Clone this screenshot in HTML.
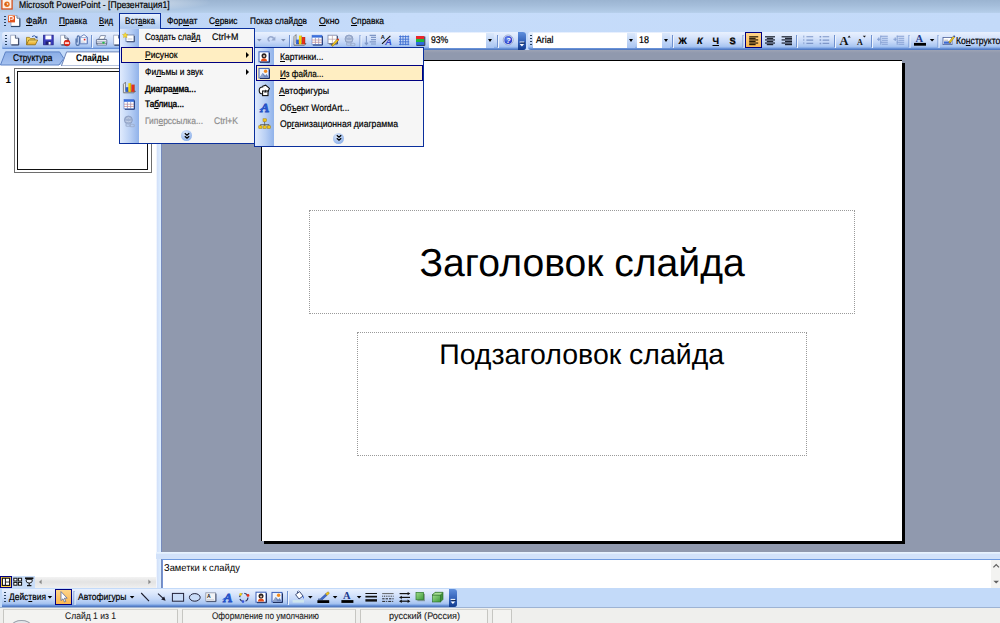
<!DOCTYPE html>
<html lang="ru"><head><meta charset="utf-8"><title>Microsoft PowerPoint - [Презентация1]</title>
<style>
*{box-sizing:border-box}
html,body{margin:0;padding:0}
body{width:1000px;height:623px;overflow:hidden;position:relative;background:#c3daf9;font-family:"Liberation Sans",sans-serif;font-size:9px}
.a{position:absolute}
.t{text-rendering:geometricPrecision;-webkit-text-stroke:0.2px currentColor;transform-origin:0 0;position:absolute;white-space:nowrap;font-family:"Liberation Sans",sans-serif;display:block}
u{text-decoration:underline;text-decoration-thickness:1px;text-underline-offset:1px}
#title{left:0;top:0;width:1000px;height:13.5px;background:linear-gradient(#9bb4d1 0,#a3bcd9 35%,#b1cae6 80%,#b6cfeb 90%,#c9e0f9 96%,#c4daf7 100%)}
#glow{left:-20px;top:-7px;width:230px;height:19px;background:radial-gradient(ellipse at center,rgba(255,255,255,.5) 0,rgba(255,255,255,.32) 45%,rgba(255,255,255,0) 72%)}
#menubar{left:0;top:13px;width:1000px;height:19px;background:linear-gradient(90deg,#b9d1f3,#c6dcfa 40%,#c3daf9)}
#tb1{left:2px;top:32px;width:524px;height:18px;background:linear-gradient(#e9f1fe 0,#dbe7fc 25%,#c5d8f8 55%,#adc8f2 76%,#a0bfef 84%,#7099dc 89%,#5f89d2 95%,#4f76bc 98%,#4f76bc 100%);border-radius:3px}
#tb2{left:528px;top:32px;width:480px;height:18px;border-radius:3px 0 0 3px;background:linear-gradient(#e9f1fe 0,#dbe7fc 25%,#c5d8f8 55%,#adc8f2 76%,#a0bfef 84%,#7099dc 89%,#5f89d2 95%,#4f76bc 98%,#4f76bc 100%)}
#left{left:0;top:49px;width:156px;height:539px;background:#fff}
#work{left:162px;top:50px;width:838px;height:502px;background:#9099ae}
#slide{left:261px;top:60px;width:641px;height:481px;background:#fff;box-shadow:3px 3px 0 #000;border-top:1px solid #000;border-left:1px solid #000}
.ph{position:absolute;border:1px dotted #9a9a9a}
#notes{left:162px;top:559px;width:838px;height:29px;background:#fff;border-left:1px solid #7494d4;border-top:1px solid #6f9be0}
#draw{left:0;top:588px;width:1000px;height:19px;background:#c3daf9}
#tb3{left:2px;top:588.5px;width:455px;height:18px;background:linear-gradient(#e9f1fe 0,#dbe7fc 25%,#c5d8f8 55%,#adc8f2 76%,#a0bfef 84%,#7099dc 89%,#5f89d2 95%,#4f76bc 98%,#4f76bc 100%);border-radius:0 3px 3px 0}
#status{left:0;top:607px;width:1000px;height:16px;background:#efefed;border-top:1px solid #9db3d4}
.menu{position:absolute;background:#f6f6f6;border:1px solid #0a2f9c}
.strip{position:absolute;left:0;top:0;bottom:0;width:18.5px;background:linear-gradient(90deg,#e0ebfd,#b8cff4 55%,#90b2ea)}
.hl{position:absolute;background:#ffeec2;border:1px solid #000080}
.sep{position:absolute;width:1px;background:#6a8ccb;box-shadow:1px 0 0 #f1f6fd}
.grip{position:absolute;width:2px;height:11px;background:repeating-linear-gradient(#27415f 0 1.4px,transparent 1.4px 2.9px)}
.grip:before{content:"";position:absolute;left:1px;top:1px;width:2px;height:11px;background:repeating-linear-gradient(#fff 0 1.4px,transparent 1.4px 2.9px);z-index:-1}
.combo{position:absolute;background:#fff;height:15px;top:32.5px}
.dd{position:absolute;top:32.5px;height:15px;width:8px;background:linear-gradient(#dbe8fb,#a9c5f2)}
.dd:after,.arr:after{content:"";position:absolute;left:2px;top:6px;border:2.5px solid transparent;border-top:3px solid #000;border-bottom:0}
.arr{position:absolute;width:8px;height:14px}
.on{position:absolute;background:linear-gradient(#fed58a,#fcb64e);border:1px solid #000080}
</style></head>
<body>
<div id="title" class="a"></div><div id="glow" class="a"></div>
<svg class="a" style="left:0;top:0" width="14" height="11" viewBox="0 0 14 11"><rect x="1.9" y="-1" width="10.2" height="10" fill="#fdf1e8" stroke="#d4501c" stroke-width="1.3"/><circle cx="7" cy="4.2" r="2.7" fill="#e8741e"/><circle cx="7.3" cy="4" r="1" fill="#fbe0c8"/><path d="M4.6 4.2h2.4" stroke="#b8400e" stroke-width=".8"/></svg>
<span class="t" style="left:19.3px;top:0px;font-size:9.8px;line-height:12px;transform:scaleX(0.8793);">Microsoft PowerPoint - [Презентация1]</span>
<div id="menubar" class="a"></div>
<div class="grip" style="left:4px;top:16px"></div>
<svg class="a" style="left:6px;top:12px" width="18" height="18" viewBox="6 12 18 18"><path d="M11 15.600h6l2.600 2.600v8h-8.600z" fill="#fff" stroke="#8a9ab8" stroke-width=".7"/><path d="M17 15.600v2.600h2.600" fill="#dde6f4" stroke="#3a4a6a" stroke-width=".7"/><path d="M19.900 18.400v8.200h-9" fill="none" stroke="#1f3a5f" stroke-width="1"/><rect x="8" y="15.400" width="7" height="7" fill="#e2521c"/><path d="M9.400 21v-4.400h2.400q1.600 0 1.600 1.300t-1.600 1.300h-1.400" fill="none" stroke="#fff" stroke-width="1.100"/><path d="M8 15.400h7" stroke="#f4a070" stroke-width=".8"/></svg>
<div class="a" style="left:119px;top:13px;width:42px;height:16px;background:linear-gradient(#e6f0fd,#a9c6ee);border:1px solid #0a2f9c;border-bottom:0"></div>
<span class="t" style="left:26px;top:16px;font-size:9.6px;line-height:12px;transform:scaleX(0.8897);"><u>Ф</u>айл</span><span class="t" style="left:59px;top:16px;font-size:9.6px;line-height:12px;transform:scaleX(0.8634);"><u>П</u>равка</span><span class="t" style="left:99px;top:16px;font-size:9.6px;line-height:12px;transform:scaleX(0.8061);"><u>В</u>ид</span><span class="t" style="left:125px;top:16px;font-size:9.6px;line-height:12px;transform:scaleX(0.8408);">Вст<u>а</u>вка</span><span class="t" style="left:167px;top:16px;font-size:9.6px;line-height:12px;transform:scaleX(0.8944);">Фор<u>м</u>ат</span><span class="t" style="left:209px;top:16px;font-size:9.6px;line-height:12px;transform:scaleX(0.8669);">С<u>е</u>рвис</span><span class="t" style="left:250px;top:16px;font-size:9.6px;line-height:12px;transform:scaleX(0.8624);">Показ слайд<u>о</u>в</span><span class="t" style="left:319px;top:16px;font-size:9.6px;line-height:12px;transform:scaleX(0.919);"><u>О</u>кно</span><span class="t" style="left:351px;top:16px;font-size:9.6px;line-height:12px;transform:scaleX(0.8762);"><u>С</u>правка</span>
<div id="tb1" class="a"></div><div id="tb2" class="a"></div>
<div class="a" style="left:518px;top:32px;width:8px;height:18px;background:linear-gradient(#5f8fdd,#2d5cb4 60%,#103a8c);border-radius:0 3px 3px 0"></div>
<div class="grip" style="left:5px;top:35px"></div><div class="grip" style="left:530px;top:35px"></div>
<div class="combo" style="left:429px;width:65px"></div><div class="dd" style="left:486px"></div><span class="t" style="left:431px;top:35px;font-size:9.8px;line-height:12px;transform:scaleX(0.882);">93%</span><div class="combo" style="left:533px;width:102px"></div><div class="dd" style="left:627px"></div><span class="t" style="left:536px;top:35px;font-size:9.8px;line-height:12px;transform:scaleX(0.8926);">Arial</span><div class="combo" style="left:637px;width:33px"></div><div class="dd" style="left:662px"></div><span class="t" style="left:639px;top:35px;font-size:9.8px;line-height:12px;transform:scaleX(0.9173);">18</span><span class="t" style="left:678.5px;top:35px;font-size:9.2px;line-height:12px;font-weight:700;">Ж</span><span class="t" style="left:697px;top:35px;font-size:9.2px;line-height:12px;font-weight:700;font-style:italic;">К</span><span class="t" style="left:712.5px;top:35px;font-size:9.2px;line-height:12px;font-weight:700;"><u>Ч</u></span><span class="t" style="left:729.5px;top:35px;font-size:9.2px;line-height:12px;font-weight:700;text-shadow:0.6px 0.6px 0 #888;">S</span><div class="on" style="left:745px;top:32px;width:17px;height:16px"></div>
<span class="t" style="left:956.3px;top:36px;font-size:9.9px;line-height:12px;transform:scaleX(0.8716);">Ко<u>н</u>структор</span>
<div id="left" class="a"></div>
<div class="a" style="left:0;top:49px;width:162px;height:16px;background:#c3daf9"></div>
<svg class="a" style="left:0;top:49px" width="162" height="17" viewBox="0 0 162 17"><defs><linearGradient id="tg" x1="0" y1="0" x2="0" y2="1"><stop offset="0" stop-color="#8aade7"/><stop offset="1" stop-color="#a6c2ef"/></linearGradient></defs><path d="M66.6 2.9H157V17H61.4z" fill="#fff" stroke="#6f86b8" stroke-width="1"/><path d="M0.5 16L5.5 2.9H59.6L63.8 9.5L59 16z" fill="url(#tg)" stroke="#5d82c5" stroke-width="1"/></svg>
<span class="t" style="left:12.8px;top:53px;font-size:9.8px;line-height:12px;transform:scaleX(0.8496);">Структура</span><span class="t" style="left:76px;top:53px;font-size:9.8px;line-height:12px;font-weight:700;transform:scaleX(0.8382);-webkit-text-stroke:0.1px #000;">Слайды</span><div class="a" style="left:14px;top:68px;width:137.7px;height:105px;border:1.5px solid #6e6e6e;background:#fff"></div><div class="a" style="left:17px;top:71px;width:131px;height:99px;border:1px solid #111;background:#fff"></div>
<span class="t" style="left:5.8px;top:74px;font-size:9px;line-height:12px;font-weight:700;font-family:"Liberation Serif", serif;">1</span><div class="a" style="left:155.5px;top:50px;width:6.5px;height:538px;background:linear-gradient(90deg,#fff,#d4e2fa 25%,#ddeeff 75%,#7f92c4 86%,#6b7fb5)"></div>
<div class="a" style="left:0;top:576.5px;width:155.5px;height:11.5px;background:linear-gradient(#f3f3f3,#e3e3e3 45%,#e6e6e6 60%,#f0f0f0)"></div><div class="a" style="left:0;top:576px;width:35px;height:12px;background:#c9ddf8"></div>
<div class="on" style="left:0;top:576px;width:12px;height:12px;background:#ffd24a"></div>


<div id="work" class="a"></div><div class="a" style="left:162px;top:50px;width:838px;height:3px;background:linear-gradient(#9da3b5,#9099ae)"></div>
<div id="slide" class="a"></div>
<div class="ph" style="left:309px;top:210px;width:546px;height:104px"></div><div class="ph" style="left:357px;top:332px;width:450px;height:124px"></div>
<span class="t" style="left:419.5px;top:240px;font-size:39.11px;line-height:47px;-webkit-text-stroke:0;">Заголовок слайда</span><span class="t" style="left:439.2px;top:338px;font-size:28.48px;line-height:34px;-webkit-text-stroke:0;">Подзаголовок слайда</span>
<div class="a" style="left:156px;top:552px;width:844px;height:7px;background:linear-gradient(#e9f4ff 0,#e4f0fe 18%,#d2e2fa 35%,#d2e2fa 100%)"></div><div id="notes" class="a"></div>
<div class="a" style="left:991px;top:560px;width:9px;height:28px;background:#f3f3f1"></div>
<span class="t" style="left:164px;top:563px;font-size:9.9px;line-height:12px;transform:scaleX(0.9478);-webkit-text-stroke:0;">Заметки к слайду</span>
<div id="draw" class="a"></div><div id="tb3" class="a"></div>
<div class="a" style="left:449px;top:588.5px;width:8px;height:18px;background:linear-gradient(#5f8fdd,#2d5cb4 60%,#103a8c);border-radius:0 3px 3px 0"></div>
<div class="grip" style="left:4px;top:592px"></div>
<span class="t" style="left:9px;top:592px;font-size:9.6px;line-height:12px;transform:scaleX(0.8797);">Дейс<u>т</u>вия</span><span class="t" style="left:78px;top:592px;font-size:9.6px;line-height:12px;transform:scaleX(0.888);">Автофи<u>г</u>уры</span><div class="on" style="left:55px;top:589px;width:17px;height:16px"></div>


<div id="status" class="a"></div>
<div class="a" style="left:3px;top:609px;width:175px;height:14px;border-left:1px solid #c6c6c2;border-right:1px solid #c6c6c2;border-top:1px solid #d4d4d0;background:#f3f3f1"></div><div class="a" style="left:182px;top:609px;width:174px;height:14px;border-left:1px solid #c6c6c2;border-right:1px solid #c6c6c2;border-top:1px solid #d4d4d0;background:#f3f3f1"></div><div class="a" style="left:360px;top:609px;width:128px;height:14px;border-left:1px solid #c6c6c2;border-right:1px solid #c6c6c2;border-top:1px solid #d4d4d0;background:#f3f3f1"></div><div class="a" style="left:492px;top:609px;width:20px;height:14px;border-left:1px solid #c6c6c2;border-right:1px solid #c6c6c2;border-top:1px solid #d4d4d0;background:#f3f3f1"></div><div class="a" style="left:12px;top:619.5px;width:19px;height:10px;border:1px solid #9aa0aa;border-radius:50%;background:#e4e6ea"></div>
<span class="t" style="left:65px;top:611px;font-size:9.6px;line-height:12px;transform:scaleX(0.8903);-webkit-text-stroke:0.1px #222;color:#1a1a1a;">Слайд 1 из 1</span><span class="t" style="left:212px;top:611px;font-size:9.6px;line-height:12px;transform:scaleX(0.8528);-webkit-text-stroke:0.1px #222;color:#1a1a1a;">Оформление по умолчанию</span><span class="t" style="left:389px;top:611px;font-size:9.6px;line-height:12px;transform:scaleX(0.9468);-webkit-text-stroke:0.1px #222;color:#1a1a1a;">русский (Россия)</span><svg class="a" style="left:0;top:0;pointer-events:none" width="1000" height="623" viewBox="0 0 1000 623" ><defs>
<linearGradient id="gy" x1="0" y1="0" x2="0" y2="1"><stop offset="0" stop-color="#fbe27e"/><stop offset="1" stop-color="#e5a21f"/></linearGradient>
<linearGradient id="gg" x1="0" y1="0" x2="1" y2="1"><stop offset="0" stop-color="#9fdc8c"/><stop offset="1" stop-color="#3d9a3a"/></linearGradient>
<linearGradient id="gb" x1="0" y1="0" x2="0" y2="1"><stop offset="0" stop-color="#5a8ae6"/><stop offset="1" stop-color="#2a4fb8"/></linearGradient>
<radialGradient id="gh" cx=".4" cy=".35" r=".7"><stop offset="0" stop-color="#6f8ff5"/><stop offset="1" stop-color="#1a2fc0"/></radialGradient>
</defs><path d="M10.6 35.2h4.8l3 3v6.4h-7.8z" fill="#fff" stroke="#8a9ab8" stroke-width=".7"/><path d="M15.399999999999999 35.2v3h3" fill="#dfe6f2" stroke="#3a4a6a" stroke-width=".8"/><path d="M18.7 38.2v6.800000000000001h-7.3" fill="none" stroke="#2a3553" stroke-width="1"/><path d="M26.5 44.6V37.4h3l1 1.2h4.4v2" fill="#f3cf55" stroke="#9a7a1a" stroke-width=".8"/><path d="M26.5 44.8l2.2-4.8h9l-2.4 4.8z" fill="url(#gy)" stroke="#8a6a12" stroke-width=".8"/><path d="M32 36.6q2.4-2 4.4.4" fill="none" stroke="#3a5fa8" stroke-width="1"/><path d="M35.2 37.8l2.4.6-.4-2.6z" fill="#2a4f98"/><rect x="43.6" y="35.2" width="9.6" height="9.6" fill="#3b3dbd" stroke="#23238a" stroke-width=".8"/><rect x="45.4" y="35.4" width="6" height="4" fill="#fff"/><rect x="45.6" y="41.4" width="5.4" height="3.2" fill="#20206a"/><rect x="48.6" y="42" width="2" height="2.6" fill="#fff"/><path d="M60.6 35.2h4.2l3 3v6.4h-7.2z" fill="#fff" stroke="#8a9ab8" stroke-width=".7"/><path d="M64.8 35.2v3h3" fill="#dfe6f2" stroke="#3a4a6a" stroke-width=".8"/><path d="M68.1 38.2v6.800000000000001h-6.7" fill="none" stroke="#2a3553" stroke-width="1"/><circle cx="67" cy="43" r="3" fill="#e8281a" stroke="#b01808" stroke-width=".5"/><rect x="64.9" y="42.3" width="4.2" height="1.5" fill="#fff"/><path d="M80 37.2l4-2.6 3.4 2.6v6.6h-7.4z" fill="#fff" stroke="#4a6ab0" stroke-width=".8"/><path d="M80.4 37.6h6.6v5.8h-6.6z" fill="#f7f9fd" stroke="#5a7ac0" stroke-width=".6"/><rect x="83.8" y="38.8" width="1.6" height="1.6" fill="#e02020"/><path d="M81 41h2.4M81 42.2h4" stroke="#b0b8d0" stroke-width=".5"/><path d="M76 38.600v4.800q0 2 1.700 2t1.700-2v-6.200q0-1.300-1.100-1.300t-1.100 1.300v5.400" fill="none" stroke="#4f6fa8" stroke-width="1.100"/><path d="M91.5 35V47" stroke="#6f91cf" stroke-width="1"/><path d="M92.5 36V48" stroke="#eef4fd" stroke-width="1"/><path d="M98.6 39.4l2-3.8h5l-1.6 3.8z" fill="#fff" stroke="#5a6a8a" stroke-width=".7"/><path d="M96.4 40.2q0-.8.8-.8h8.8q.8 0 .8.8v3.4h-10.4z" fill="#e6e9f0" stroke="#4a5878" stroke-width=".8"/><rect x="97" y="43.2" width="9.4" height="1.8" fill="#fff" stroke="#4a5878" stroke-width=".7"/><circle cx="103.5" cy="42.6" r="1.2" fill="#20c040"/><path d="M96.6 41.6h10" stroke="#9aa6c0" stroke-width=".7"/><path d="M113.6 35.2h5l3 3v6.6h-8z" fill="#fff" stroke="#8a9ab8" stroke-width=".7"/><path d="M118.6 35.2v3h3" fill="#dfe6f2" stroke="#3a4a6a" stroke-width=".8"/><path d="M121.89999999999999 38.2v7.0h-7.5" fill="none" stroke="#2a3553" stroke-width="1"/><path d="M257 39h4.6l-2.3 2.6z" fill="#7f91b5"/><path d="M269.600 41.400q-2.400-1.400-1-3.400t4-.800l1 1.200" fill="none" stroke="#95a7cd" stroke-width="1.600"/><path d="M275.400 36.400v4.200h-4.200z" fill="#95a7cd"/><path d="M281 39h4.6l-2.3 2.6z" fill="#7f91b5"/><path d="M289.5 35V47" stroke="#6f91cf" stroke-width="1"/><path d="M290.5 36V48" stroke="#eef4fd" stroke-width="1"/><path d="M294 45.1V36.6l2-2v8.5" fill="#f4f4f4" stroke="#555" stroke-width=".7"/><path d="M294 45.2h10.5l1.5-1.6h-10" fill="#ddd" stroke="#444" stroke-width=".7"/><rect x="296.2" y="39.6" width="2.4" height="4.6" fill="#2a62d8"/><rect x="299" y="35.6" width="2.6" height="8.6" fill="#f6d800"/><rect x="302" y="37.0" width="3" height="7.2" fill="#e8301a"/><path d="M298.6 39.6v4.6M301.6 35.6v8.6M305 37.0v7.2" stroke="#6a2a10" stroke-width=".6" opacity=".6"/><rect x="312" y="35.2" width="10" height="9.4" fill="#fff" stroke="#5a78c8" stroke-width=".6"/><rect x="312" y="35.2" width="10" height="2.4" fill="#3a6fdc"/><path d="M315.4 37.6v7M318.7 37.6v7" stroke="#8a93c8" stroke-width=".8"/><path d="M312 40.0h10M312 42.300000000000004h10" stroke="#c98a8a" stroke-width=".7"/><path d="M322.4 36.2v8.9h-9.6" fill="none" stroke="#1f3878" stroke-width="1"/><rect x="328" y="35.2" width="9" height="8.4" fill="#fff" stroke="#7a86a8" stroke-width=".8"/><path d="M332.4 35.2v8.4M328 39.2h9" stroke="#b8a0a8" stroke-width=".7"/><path d="M337.4 36v8h-8" fill="none" stroke="#3a4a70" stroke-width="1"/><path d="M331.4 45.2l5.6-6 1.4 1.4-5.6 5.8z" fill="#f2c81e" stroke="#7a5a10" stroke-width=".5"/><path d="M337 39.2l1-1 1.2 1.4-.8 1z" fill="#e8381a"/><path d="M331.2 45.4l.4-1.2 1 .9z" fill="#222"/><circle cx="349" cy="39" r="4" fill="#9fb0d0" stroke="#8a9cc0" stroke-width=".8"/><path d="M347 37.5q2-1.5 4 0M346 40q3 1.5 6 0" stroke="#c8d4ea" stroke-width=".9" fill="none"/><rect x="346.5" y="42.6" width="4.6" height="2.6" rx="1.3" fill="none" stroke="#9fb0d0" stroke-width="1.1"/><rect x="350.4" y="43.2" width="4.6" height="2.6" rx="1.3" fill="none" stroke="#9fb0d0" stroke-width="1.1"/><path d="M360 35V47" stroke="#6f91cf" stroke-width="1"/><path d="M361 36V48" stroke="#eef4fd" stroke-width="1"/><path d="M366.4 36v8.4M364.8 42.6l1.6 2 1.6-2" fill="none" stroke="#7f97c6" stroke-width="1.1"/><path d="M369.6 35.4h6.4M371 37.4h5M371 39.6h5M369.6 41.8h6.4M371 44h5" stroke="#7f97c6" stroke-width="1.2"/><text x="380.8" y="39.4" font-family="Liberation Sans,sans-serif" font-weight="700" font-size="5.6" fill="#111">A</text><path d="M382 43.8l8.4-8" stroke="#111" stroke-width="1.1"/><text x="385" y="45.2" font-family="Liberation Sans,sans-serif" font-weight="700" font-style="italic" font-size="9.6" fill="#3548c8">A</text><path d="M400.4 35.4v9.8M403 35.4v9.8M405.6 35.4v9.8M408.2 35.4v9.8M399 36.6h10.2M399 39.2h10.2M399 41.8h10.2M399 44.4h10.2" stroke="#3f6fd2" stroke-width=".9"/><rect x="416" y="36" width="8.4" height="3" fill="#e8262a"/><rect x="416" y="39" width="8.4" height="3" fill="#1fb83a"/><rect x="416" y="42" width="8.4" height="3" fill="#2c6ae0"/><path d="M424.8 36.6v8.8h-8.4" fill="none" stroke="#26324e" stroke-width="1"/><path d="M497.5 35V47" stroke="#6f91cf" stroke-width="1"/><path d="M498.5 36V48" stroke="#eef4fd" stroke-width="1"/><circle cx="508.2" cy="40" r="5" fill="#e8eefb" stroke="#8a9cc8" stroke-width=".8"/><circle cx="508.2" cy="40" r="3.9" fill="url(#gh)"/><text x="506.3" y="42.6" font-family="Liberation Sans,sans-serif" font-weight="700" font-style="italic" font-size="7" fill="#fff">?</text><path d="M519.6 42h4.6" stroke="#fff" stroke-width="1"/><path d="M519.6 44h4.6l-2.3 2.6z" fill="#fff"/><path d="M520.4 43h4.6" stroke="#000" stroke-width=".8" opacity=".7"/><path d="M672.5 35V47" stroke="#6f91cf" stroke-width="1"/><path d="M673.5 36V48" stroke="#eef4fd" stroke-width="1"/><path d="M743 35V47" stroke="#6f91cf" stroke-width="1"/><path d="M744 36V48" stroke="#eef4fd" stroke-width="1"/><rect x="749.20" y="36.20" width="9" height="1.2" fill="#2a1c08" opacity="1"/><rect x="749.20" y="37.76" width="6.4" height="1.2" fill="#2a1c08" opacity="1"/><rect x="749.20" y="39.32" width="9" height="1.2" fill="#2a1c08" opacity="1"/><rect x="749.20" y="40.88" width="6.4" height="1.2" fill="#2a1c08" opacity="1"/><rect x="749.20" y="42.44" width="9" height="1.2" fill="#2a1c08" opacity="1"/><rect x="749.20" y="44.00" width="6.4" height="1.2" fill="#2a1c08" opacity="1"/><rect x="765.00" y="36.20" width="10" height="1.2" fill="#1c2230" opacity="1"/><rect x="766.80" y="37.76" width="6.4" height="1.2" fill="#1c2230" opacity="1"/><rect x="765.00" y="39.32" width="10" height="1.2" fill="#1c2230" opacity="1"/><rect x="766.80" y="40.88" width="6.4" height="1.2" fill="#1c2230" opacity="1"/><rect x="765.00" y="42.44" width="10" height="1.2" fill="#1c2230" opacity="1"/><rect x="766.80" y="44.00" width="6.4" height="1.2" fill="#1c2230" opacity="1"/><rect x="781.60" y="36.20" width="10.4" height="1.2" fill="#1c2230" opacity="1"/><rect x="785.00" y="37.76" width="7" height="1.2" fill="#1c2230" opacity="1"/><rect x="781.60" y="39.32" width="10.4" height="1.2" fill="#1c2230" opacity="1"/><rect x="785.00" y="40.88" width="7" height="1.2" fill="#1c2230" opacity="1"/><rect x="781.60" y="42.44" width="10.4" height="1.2" fill="#1c2230" opacity="1"/><rect x="785.00" y="44.00" width="7" height="1.2" fill="#1c2230" opacity="1"/><path d="M796.5 35V47" stroke="#6f91cf" stroke-width="1"/><path d="M797.5 36V48" stroke="#eef4fd" stroke-width="1"/><path d="M806.4 36.8h6.8M806.4 40.1h6.8M806.4 43.4h6.8" stroke="#7f97c8" stroke-width="1.1"/><path d="M803.8 35.6v9" stroke="#8fa6d2" stroke-width="1" stroke-dasharray="2 1.3"/><path d="M822.6 36.8h6.6M822.6 40.1h6.6M822.6 43.4h6.6" stroke="#7f97c8" stroke-width="1.1"/><path d="M819.6 36.8h1.6M819.6 40.1h1.6M819.6 43.4h1.6" stroke="#7f97c8" stroke-width="1.5"/><path d="M834.5 35V47" stroke="#6f91cf" stroke-width="1"/><path d="M835.5 36V48" stroke="#eef4fd" stroke-width="1"/><text x="839.4" y="44.8" font-family="Liberation Serif,serif" font-weight="700" font-size="12.4" fill="#111">A</text><path d="M847.6 37.4l1.5-1.8 1.5 1.8z" fill="#111"/><text x="857" y="45" font-family="Liberation Serif,serif" font-weight="700" font-size="8" fill="#111">A</text><path d="M862.8 35.8h3.2l-1.6 1.8z" fill="#111"/><path d="M871.5 35V47" stroke="#6f91cf" stroke-width="1"/><path d="M872.5 36V48" stroke="#eef4fd" stroke-width="1"/><path d="M880.4 36.2h7.4M882 38.2h5.8M882 40.2h5.8M880.4 42.2h7.4M882 44.2h5.8" stroke="#86a0d2" stroke-width="1.100"/><path d="M877 39.2h3.2M878.8 37.4v3.6" stroke="#86a0d2" stroke-width="1.100"/><path d="M880.8 35.600v9.200" stroke="#86a0d2" stroke-width="1"/><path d="M896.8 36.2h7.4M898.4 38.2h5.8M898.4 40.2h5.8M896.8 42.2h7.4M898.4 44.2h5.8" stroke="#86a0d2" stroke-width="1.100"/><path d="M893.4 39.2h3.2M895.1999999999999 37.4v3.6" stroke="#86a0d2" stroke-width="1.100"/><path d="M897.1999999999999 35.600v9.200" stroke="#86a0d2" stroke-width="1"/><path d="M909 35V47" stroke="#6f91cf" stroke-width="1"/><path d="M910 36V48" stroke="#eef4fd" stroke-width="1"/><text x="915.6" y="42.2" font-family="Liberation Serif,serif" font-weight="700" font-size="10.5" fill="#1c3a8c">A</text><rect x="914" y="42.900000000000006" width="12" height="2.8" fill="#000"/><path d="M929.8 39h4.6l-2.3 2.6z" fill="#000"/><path d="M938 35V47" stroke="#6f91cf" stroke-width="1"/><path d="M939 36V48" stroke="#eef4fd" stroke-width="1"/><rect x="943" y="37.4" width="9" height="7.2" fill="#fff" stroke="#4a5f98" stroke-width=".8"/><rect x="944" y="41.4" width="7" height="2.4" fill="#3f6ad0"/><path d="M944.2 40.2h4" stroke="#9a9a9a" stroke-width=".7"/><path d="M948.6 42.2l4.6-6 1.4 1-4.6 6z" fill="#f2c61a" stroke="#7a5a10" stroke-width=".4"/><path d="M953.2 36.2l.8-1 1.4 1-.8 1z" fill="#2a4fb0"/><rect x="2.4" y="578.2" width="7.2" height="7.2" fill="#fff" stroke="#111" stroke-width="1.1"/><path d="M5.4 578v7.4" stroke="#111" stroke-width="1"/><path d="M5.8 582h3.6" stroke="#111" stroke-width=".8"/><rect x="13.8" y="578.2" width="3.2" height="2.8" fill="#fff" stroke="#111" stroke-width="1"/><rect x="18.4" y="578.2" width="3.2" height="2.8" fill="#fff" stroke="#111" stroke-width="1"/><rect x="13.8" y="582.4" width="3.2" height="2.8" fill="#fff" stroke="#111" stroke-width="1"/><rect x="18.4" y="582.4" width="3.2" height="2.8" fill="#fff" stroke="#111" stroke-width="1"/><path d="M25 578.2h8.4" stroke="#111" stroke-width="1.6"/><path d="M26.2 579.4v1.6q0 2 3 2t3-2v-1.6z" fill="#e8eef8" stroke="#111" stroke-width=".9"/><path d="M29.2 583v2M27 585.6h4.4" stroke="#111" stroke-width="1.1"/><path d="M41.6 579.6v4.6l-2.6-2.3z" fill="#8a8a8a"/><path d="M148.4 579.6v4.6l2.6-2.3z" fill="#8a8a8a"/><path d="M993.400 567.400l2.800-2.800 2.800 2.800" fill="none" stroke="#606060" stroke-width="1.300"/><path d="M993.400 580.800l2.800 2.800 2.800-2.800z" fill="#606060"/><path d="M47.6 596h4.6l-2.3 2.6z" fill="#000"/><path d="M61 591.6v9l2-1.8 1.4 3.2 1.4-.6-1.4-3.2h2.8z" fill="#fff" stroke="#5a6a9a" stroke-width=".8"/><path d="M74 591V604" stroke="#6f91cf" stroke-width="1"/><path d="M75 592V605" stroke="#eef4fd" stroke-width="1"/><path d="M129.8 596h4.6l-2.3 2.6z" fill="#000"/><path d="M141.2 593l7.8 8.2" stroke="#1a1a2a" stroke-width="1.1"/><path d="M158 593.6l6 5.6" stroke="#1a1a2a" stroke-width="1.1"/><path d="M165.6 600.8l-4.4-1.2 3-3z" fill="#1a1a2a"/><rect x="172.4" y="593.4" width="11.2" height="7.8" fill="#c9dcf8" stroke="#23233a" stroke-width="1"/><ellipse cx="194.8" cy="597.4" rx="5.4" ry="3.8" fill="#c9dcf8" stroke="#23233a" stroke-width="1"/><rect x="205.8" y="592.8" width="9.8" height="8.4" fill="#f2f3f5" stroke="#8a93a8" stroke-width=".8"/><path d="M216 593.6v8h-9.6" fill="none" stroke="#4a5570" stroke-width="1"/><text x="207" y="598.4" font-family="Liberation Sans,sans-serif" font-weight="700" font-size="5" fill="#111">A</text><path d="M207 599.6h7" stroke="#b8bcc8" stroke-width=".6"/><text x="223.5" y="601.8" font-family="Liberation Serif,serif" font-weight="700" font-style="italic" font-size="13.5" fill="#2a5bd6" stroke="#2450c4" stroke-width=".8">A</text><path d="M222 599.4l3.6-2.2v2.6z" fill="#2a5bd6"/><circle cx="243.8" cy="597.4" r="4.2" fill="none" stroke="#2a3560" stroke-width="1.2" stroke-dasharray="4.6 2"/><circle cx="240.6" cy="594.4" r="1.3" fill="#f2d21a"/><circle cx="248" cy="595.4" r="1.4" fill="#e8301a"/><circle cx="243" cy="601.6" r="1.3" fill="#3a55d8"/><rect x="256" y="592.2" width="10" height="10" fill="#fff" stroke="#3a5fb8" stroke-width="1"/><path d="M266.5 593.2v9.5h-9.5" fill="none" stroke="#1f3060" stroke-width="1"/><path d="M258 601.6q0-3 3-3t3 3z" fill="#e8501a"/><circle cx="261" cy="596.1" r="2.5" fill="#2b2222"/><circle cx="261.1" cy="596.5" r="1.1" fill="#d8c0b0"/><rect x="272" y="592.4" width="10" height="9.6" fill="#eef3fb" stroke="#3a5fb8" stroke-width="1"/><path d="M282.5 593.4v9.1h-9.5" fill="none" stroke="#1f3060" stroke-width="1"/><circle cx="278.6" cy="595.1999999999999" r="1.7" fill="#f28a1c"/><path d="M272.6 601.4l3.2-4.4 2.4 2.6 1.6-1.6 1.8 3.4z" fill="#6d86b8"/><path d="M272.6 601.4l3.2-4.4 1.2 4.4z" fill="#90a4cc"/><path d="M287.5 591V604" stroke="#6f91cf" stroke-width="1"/><path d="M288.5 592V605" stroke="#eef4fd" stroke-width="1"/><path d="M295.6 594.6l4-3 3.4 4.4-4 3z" fill="#fff" stroke="#2a3a6a" stroke-width=".9"/><path d="M298.4 590.8q-1.4.2-.8 2.400" fill="none" stroke="#2a3a6a" stroke-width=".8"/><path d="M302.8 595.6q1.6 1.2 1 3.400-1.4-1.200-1-3.400z" fill="#2a5bd6"/><rect x="292.6" y="600" width="11.4" height="2.6" fill="#cfe6ee"/><path d="M308 596h4.6l-2.3 2.6z" fill="#000"/><path d="M320.6 598.6l5-4.600 1.400 1.400-5 4.600z" fill="#3f6ad0" stroke="#24407a" stroke-width=".5"/><path d="M325.6 594l1.600-1.800q1.200-.600 1.800.2t-.2 1.600l-1.800 1.400z" fill="#f2c61a" stroke="#7a5a10" stroke-width=".4"/><path d="M318 599.200h3" stroke="#24407a" stroke-width=".9"/><rect x="317.400" y="600.200" width="11.800" height="2.800" fill="#000"/><path d="M332.8 596h4.6l-2.3 2.6z" fill="#000"/><text x="343.0" y="599.4" font-family="Liberation Serif,serif" font-weight="700" font-size="10.5" fill="#1c3a8c">A</text><rect x="341.4" y="600.0999999999999" width="12" height="2.8" fill="#000"/><path d="M356.8 596h4.6l-2.3 2.6z" fill="#000"/><rect x="365.4" y="593" width="11.600" height="1" fill="#111"/><rect x="365.400" y="595.800" width="11.600" height="1.700" fill="#111"/><rect x="365.400" y="599.200" width="11.600" height="2.400" fill="#111"/><path d="M382.200 593.600h11.400" stroke="#555" stroke-width=".9"/><path d="M382.200 596.200h11.400" stroke="#333" stroke-width="1" stroke-dasharray="1 .8"/><path d="M382.200 598.800h11.400" stroke="#222" stroke-width="1" stroke-dasharray="2.400 1"/><path d="M382.200 601.400h11.400" stroke="#222" stroke-width="1" stroke-dasharray="3 1 1 1"/><path d="M399.600 593.600h9" stroke="#111" stroke-width="1.200"/><path d="M410.400 593.600l-2.800-1.700v3.400z" fill="#111"/><path d="M401 597.400h9" stroke="#111" stroke-width="1.200"/><path d="M399 597.400l2.800-1.700v3.400z" fill="#111"/><path d="M401 601.200h7.600" stroke="#111" stroke-width="1.200"/><path d="M399 601.200l2.800-1.700v3.400zM410.400 601.200l-2.800-1.700v3.400z" fill="#111"/><rect x="417.400" y="593.800" width="7.600" height="7.400" fill="#5a6a5a" opacity=".55"/><rect x="416" y="592.400" width="7.600" height="7.400" fill="url(#gg)" stroke="#2f7a2c" stroke-width=".7"/><path d="M432.400 595l2.600-2.600h8v7l-2.600 2.600z" fill="#3f8f3a" stroke="#2a6a28" stroke-width=".6"/><rect x="432.400" y="595" width="8" height="7" fill="url(#gg)" stroke="#2a6a28" stroke-width=".6"/><path d="M432.400 595l2.600-2.600h8l-2.600 2.600z" fill="#a8e094" stroke="#2a6a28" stroke-width=".5"/><path d="M450.6 599.4h4.6" stroke="#fff" stroke-width="1"/><path d="M450.6 601.4h4.6l-2.3 2.6z" fill="#fff"/><path d="M451.40000000000003 600.4h4.6" stroke="#000" stroke-width=".8" opacity=".7"/></svg>

<div class="menu" style="left:119px;top:28px;width:136px;height:116px"><div class="strip"></div></div>
<div class="a" style="left:120px;top:28px;width:40px;height:1px;background:#b4ccf1"></div>
<div class="hl" style="left:121px;top:47px;width:132px;height:16px"></div>
<span class="t" style="left:145px;top:32px;font-size:9.6px;line-height:12px;transform:scaleX(0.8427);">Создать сла<u>й</u>д</span><span class="t" style="left:211.5px;top:32px;font-size:9.6px;line-height:12px;transform:scaleX(0.9287);">Ctrl+M</span><span class="t" style="left:145px;top:50px;font-size:9.6px;line-height:12px;transform:scaleX(0.8976);"><u>Р</u>исунок</span><span class="t" style="left:145px;top:67px;font-size:9.6px;line-height:12px;transform:scaleX(0.8821);">Фи<u>л</u>ьмы и звук</span><span class="t" style="left:145px;top:84px;font-size:9.6px;line-height:12px;transform:scaleX(0.8805);-webkit-text-stroke:0.4px #000;">Диагра<u>м</u>ма...</span><span class="t" style="left:145px;top:99px;font-size:9.6px;line-height:12px;transform:scaleX(0.8544);-webkit-text-stroke:0.4px #000;">Та<u>б</u>лица...</span><span class="t" style="left:145px;top:116px;font-size:9.6px;line-height:12px;color:#8d8d8d;transform:scaleX(0.8821);">Гип<u>е</u>рссылка...</span><span class="t" style="left:214px;top:116px;font-size:9.6px;line-height:12px;color:#8d8d8d;transform:scaleX(0.8909);">Ctrl+K</span><div class="a" style="left:246px;top:52px;border:3px solid transparent;border-left:3.5px solid #000;border-right:0"></div><div class="a" style="left:246px;top:69px;border:3px solid transparent;border-left:3.5px solid #000;border-right:0"></div>
<svg class="a" style="left:0;top:0;pointer-events:none" width="1000" height="623" viewBox="0 0 1000 623" ><rect x="126" y="35" width="8" height="6.400" fill="#fff" stroke="#6a7aa0" stroke-width=".8"/><path d="M134.400 36v5.800h-7.600" fill="none" stroke="#3a4a70" stroke-width=".9"/><path d="M127.600 39h4.800" stroke="#b0b8cc" stroke-width=".8"/><path d="M125.200 32.600l.9 1.700 1.900.2-1.400 1.300.4 1.900-1.800-.9-1.700.9.300-1.900-1.300-1.300 1.900-.2z" fill="#f7dc3a" stroke="#c8a010" stroke-width=".4"/><path d="M123.4 92.7V84.2l2-2v8.5" fill="#f4f4f4" stroke="#555" stroke-width=".7"/><path d="M123.4 92.8h10.5l1.5-1.6h-10" fill="#ddd" stroke="#444" stroke-width=".7"/><rect x="125.60000000000001" y="87.2" width="2.4" height="4.6" fill="#2a62d8"/><rect x="128.4" y="83.2" width="2.6" height="8.6" fill="#f6d800"/><rect x="131.4" y="84.60000000000001" width="3" height="7.2" fill="#e8301a"/><path d="M128.0 87.2v4.6M131.0 83.2v8.6M134.4 84.60000000000001v7.2" stroke="#6a2a10" stroke-width=".6" opacity=".6"/><rect x="124" y="99.4" width="10" height="9.4" fill="#fff" stroke="#5a78c8" stroke-width=".6"/><rect x="124" y="99.4" width="10" height="2.4" fill="#3a6fdc"/><path d="M127.4 101.80000000000001v7M130.7 101.80000000000001v7" stroke="#8a93c8" stroke-width=".8"/><path d="M124 104.2h10M124 106.5h10" stroke="#c98a8a" stroke-width=".7"/><path d="M134.4 100.4v8.9h-9.6" fill="none" stroke="#1f3878" stroke-width="1"/><circle cx="128.4" cy="120" r="4" fill="#9fb0d0" stroke="#8a9cc0" stroke-width=".8"/><path d="M126.4 118.5q2-1.5 4 0M125.4 121q3 1.5 6 0" stroke="#c8d4ea" stroke-width=".9" fill="none"/><rect x="125.9" y="123.6" width="4.6" height="2.6" rx="1.3" fill="none" stroke="#9fb0d0" stroke-width="1.1"/><rect x="129.8" y="124.2" width="4.6" height="2.6" rx="1.3" fill="none" stroke="#9fb0d0" stroke-width="1.1"/></svg>
<div class="a" style="left:181.0px;top:130.0px;width:11px;height:11px;border-radius:50%;background:radial-gradient(circle at 40% 30%,#dfeafc,#8fb2ea 75%,#6f98dc)"></div><svg class="a" style="left:182.5px;top:131.5px" width="8" height="8" viewBox="0 0 8 8"><path d="M1.800 1.200l2.200 2 2.200-2M1.800 4.200l2.200 2 2.200-2" fill="none" stroke="#000" stroke-width="1.200"/></svg><div class="menu" style="left:254px;top:47px;width:170px;height:100px"><div class="strip"></div></div>
<div class="hl" style="left:256px;top:65px;width:166.5px;height:16px"></div>
<span class="t" style="left:279.5px;top:52px;font-size:9.6px;line-height:12px;transform:scaleX(0.8935);"><u>К</u>артинки...</span><span class="t" style="left:279.5px;top:69px;font-size:9.6px;line-height:12px;transform:scaleX(0.8445);"><u>И</u>з файла...</span><span class="t" style="left:279px;top:86px;font-size:9.6px;line-height:12px;transform:scaleX(0.9155);"><u>А</u>втофигуры</span><span class="t" style="left:279.5px;top:103px;font-size:9.6px;line-height:12px;transform:scaleX(0.8866);">Об<u>ъ</u>ект WordArt...</span><span class="t" style="left:279.5px;top:119px;font-size:9.6px;line-height:12px;transform:scaleX(0.9017);">Ор<u>г</u>анизационная диаграмма</span><svg class="a" style="left:0;top:0;pointer-events:none" width="1000" height="623" viewBox="0 0 1000 623" ><rect x="259" y="51.8" width="10" height="10" fill="#fff" stroke="#3a5fb8" stroke-width="1"/><path d="M269.5 52.8v9.5h-9.5" fill="none" stroke="#1f3060" stroke-width="1"/><path d="M261 61.199999999999996q0-3 3-3t3 3z" fill="#e8501a"/><circle cx="264" cy="55.699999999999996" r="2.5" fill="#2b2222"/><circle cx="264.1" cy="56.099999999999994" r="1.1" fill="#d8c0b0"/><rect x="259" y="68.4" width="10" height="9.6" fill="#eef3fb" stroke="#3a5fb8" stroke-width="1"/><path d="M269.5 69.4v9.1h-9.5" fill="none" stroke="#1f3060" stroke-width="1"/><circle cx="265.6" cy="71.2" r="1.7" fill="#f28a1c"/><path d="M259.6 77.4l3.2-4.4 2.4 2.6 1.6-1.6 1.8 3.4z" fill="#6d86b8"/><path d="M259.6 77.4l3.2-4.4 1.2 4.4z" fill="#90a4cc"/><circle cx="262.600" cy="90.400" r="3.400" fill="#fff" stroke="#111" stroke-width="1.100"/><path d="M262 86.400l3.600-1.200 3.800 3.200-1.600 3.600" fill="#fff" stroke="#111" stroke-width="1.100"/><rect x="262.600" y="91" width="5.400" height="4.600" fill="#fff" stroke="#111" stroke-width="1.100"/><path d="M264 92.400l1.400-2 1.400 2z" fill="#111"/><text x="260.5" y="112.2" font-family="Liberation Serif,serif" font-weight="700" font-style="italic" font-size="13.23" fill="#2a5bd6" stroke="#2450c4" stroke-width=".8">A</text><path d="M259 109.8l3.6-2.2v2.6z" fill="#2a5bd6"/><path d="M264.600 121.600v2M260.400 126.400v-1.800h8.600v1.800M264.600 123.600v2.400" fill="none" stroke="#555" stroke-width=".8"/><rect x="263" y="118.800" width="3.400" height="2.800" fill="#f2c61a" stroke="#9a7a10" stroke-width=".5"/><rect x="258.800" y="125.800" width="3.200" height="2.600" fill="#f2c61a" stroke="#9a7a10" stroke-width=".5"/><rect x="263" y="125.800" width="3.200" height="2.600" fill="#f2c61a" stroke="#9a7a10" stroke-width=".5"/><rect x="267.200" y="125.800" width="3.200" height="2.600" fill="#f2c61a" stroke="#9a7a10" stroke-width=".5"/></svg>
<div class="a" style="left:333.0px;top:132.5px;width:11px;height:11px;border-radius:50%;background:radial-gradient(circle at 40% 30%,#dfeafc,#8fb2ea 75%,#6f98dc)"></div><svg class="a" style="left:334.5px;top:134px" width="8" height="8" viewBox="0 0 8 8"><path d="M1.800 1.200l2.200 2 2.200-2M1.800 4.200l2.200 2 2.200-2" fill="none" stroke="#000" stroke-width="1.200"/></svg></body></html>
